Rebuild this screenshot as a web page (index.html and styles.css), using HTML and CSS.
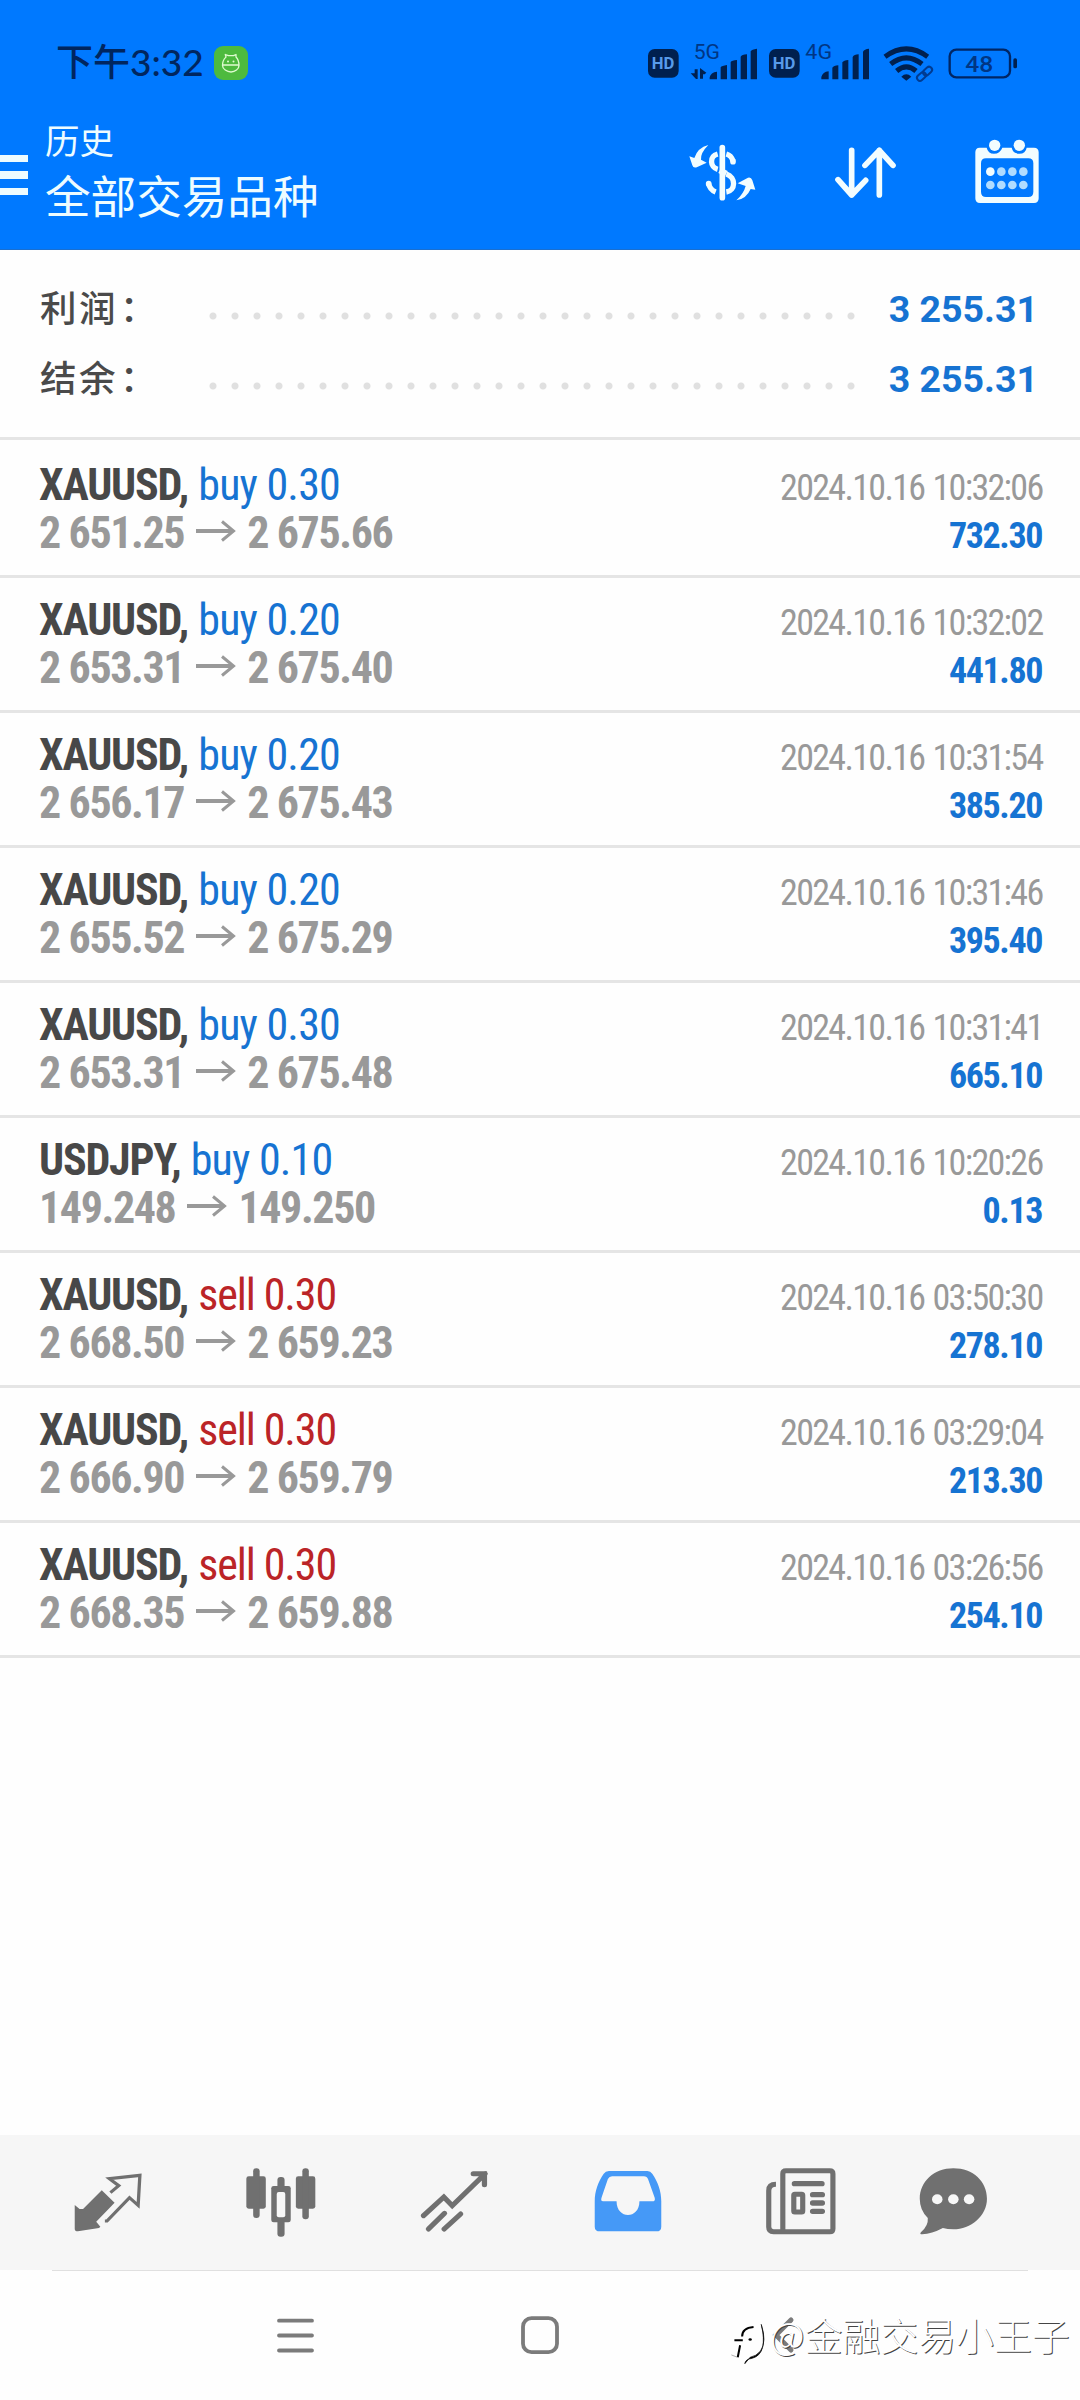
FILE: index.html
```html
<!DOCTYPE html>
<html lang="zh-CN">
<head>
<meta charset="utf-8">
<title>历史</title>
<link rel="stylesheet" href="styles.css">
</head>
<body>
<header class="header">
  <div class="status">
    <span class="clock">下午3:32</span>
    <svg class="app-badge" width="34" height="34" viewBox="0 0 34 34"><rect width="34" height="34" rx="9" fill="#4dba3e"/><g fill="none" stroke="#dffbd0" stroke-width="1.3" stroke-linejoin="round"><path d="M8.500 19.500C8.500 14 10.500 12.500 12 11L11.300 8.500L14.500 9.700H19.500L22 8.500L22 11C24 13 25 15 25 19.500C25 23 21 26 17 26S8.500 23 8.500 19.500ZM8.500 19H25"/></g><circle cx="14" cy="15.500" r="1" fill="#dffbd0"/><circle cx="19.500" cy="15.500" r="1" fill="#dffbd0"/></svg>
    <svg class="status-icons" width="374" height="46.700" viewBox="80 50 1122 140">
      <g fill="#00204f">
        <rect x="86" y="86" width="92" height="86" rx="20"/><rect x="449" y="86" width="92" height="86" rx="20"/>
        <path d="M271 177v-6q3-15 22-17v23zM304 177v-36q3-5 19-7v43zM334 177v-52q3-5 19-6v58zM364 177v-68q3-6 19-7v75zM394 177v-84q3-6 19-8v92z"/>
        <path d="M606 177v-7q4-15 22-17v24zM639 177v-35q4-6 18-7v42zM669 177v-51q4-6 18-7v58zM700 177v-67q4-7 18-8v75zM731 177v-83q4-8 18-9v92z"/>
        <path d="M226 147h9v29h-5l-16-17h12zM242 175v-32l19 14-5 5h-5v13z"/>
        <path d="M846 169q15-14 30 0l-15 12z"/>
        <rect x="1182" y="114" width="11" height="30" rx="5"/>
      </g>
      <g fill="none" stroke="#00204f" stroke-width="15">
        <path d="M797 109Q861 62 925 109M814 131Q861 94 908 131M832 152Q861 127 890 152"/>
        <rect x="991" y="88" width="181" height="83" rx="20" stroke-width="7" stroke="#002665"/>
        <g stroke-width="6" stroke="#003b91"><rect x="-17" y="-9" width="30" height="18" rx="9" transform="translate(908 167) rotate(-42)"/><rect x="-14" y="-9" width="30" height="18" rx="9" transform="translate(924 153) rotate(-42)"/></g>
      </g>
      <g class="status-label">
        <text x="97" y="147" font-size="50" font-weight="700" fill="#579bea">HD</text><text x="460" y="147" font-size="50" font-weight="700" fill="#579bea">HD</text>
        <text x="223" y="116" font-size="60" textLength="79" lengthAdjust="spacingAndGlyphs">5G</text><text x="558" y="116" font-size="60" textLength="80" lengthAdjust="spacingAndGlyphs">4G</text>
        <text x="1038" y="155" font-size="68" textLength="84" lengthAdjust="spacingAndGlyphs" font-weight="500">48</text>
      </g>
    </svg>
  </div>
  <div class="toolbar">
    <div class="menu"><i></i><i></i><i></i></div>
    <div class="titles"><div class="title">历史</div><div class="subtitle">全部交易品种</div></div>
    <svg class="actions" width="354" height="68" viewBox="200 352 1062 204">
      <g fill="none" stroke="#f2fdff" stroke-width="17" stroke-linecap="round" stroke-linejoin="round">
        <path d="M306 384v150"/>
        <path d="M292 403C266 410 269 443 292 449M318 403Q333 407 338 424M318 463C348 473 346 513 318 517M265 492Q268 510 286 517" stroke-width="16" stroke-linecap="butt"/>
        <path d="M338 424v2M265 492v1" stroke-width="17"/>
        <path d="M318 462L298 452" stroke-width="18" stroke-linecap="butt"/>
        <path d="M694 392V526M653 480L694 526L736 482M777 526V392M734 437L777 392L818 437"/>
      </g>
      <g fill="#f2fdff">
        <path d="M264 376Q240 400 242 420L259 429L231 442Q219 447 216 437L207 410L222 415Q232 384 264 376ZM348 542Q370 522 376 499L352 491L383 474Q392 471 396 482L405 510L391 508Q378 538 348 542Z"/>
        <path fill-rule="evenodd" d="M1078 384H1099Q1103 402 1121 402T1146 384H1174Q1178 402 1197 402T1219 384H1241Q1255 384 1255 398V536Q1255 550 1241 550H1079Q1065 550 1065 536V398Q1065 384 1078 384ZM1097 416Q1082 416 1082 431V516Q1082 532 1097 532H1224Q1239 532 1239 516V431Q1239 416 1224 416Z"/>
        <circle cx="1123" cy="377" r="17"/><circle cx="1197" cy="377" r="17"/><circle cx="1110" cy="456" r="13"/>
        <g fill="#b0dcff"><circle cx="1143" cy="456" r="13"/><circle cx="1176" cy="456" r="13"/><circle cx="1209" cy="456" r="13"/><circle cx="1110" cy="496" r="13"/><circle cx="1143" cy="496" r="13"/><circle cx="1176" cy="496" r="13"/><circle cx="1209" cy="496" r="13"/></g>
      </g>
    </svg>
  </div>
</header>
<svg width="0" height="0" class="defs"><symbol id="arrow" viewBox="0 0 40 22"><path d="M0 11H37" fill="none" stroke="#999" stroke-width="4"/><path d="M26 1.500L37.500 11L26 20.500" fill="none" stroke="#999" stroke-width="3"/></symbol></svg>
<main class="content">
  <section class="summary">
    <div class="total"><span class="total-name">利润<span class="colon">：</span></span><span class="dots"></span><b class="total-value">3 255.31</b></div>
    <div class="total"><span class="total-name">结余<span class="colon">：</span></span><span class="dots"></span><b class="total-value">3 255.31</b></div>
  </section>
  <section class="deals">
    <div class="deal"><div class="line"><span><b class="symbol">XAUUSD,</b> <span class="buy">buy 0.30</span></span><span class="date">2024.10.16 10:32:06</span></div><div class="line"><span class="price">2 651.25<svg class="arrow"><use href="#arrow"/></svg>2 675.66</span><b class="profit">732.30</b></div></div>
    <div class="deal"><div class="line"><span><b class="symbol">XAUUSD,</b> <span class="buy">buy 0.20</span></span><span class="date">2024.10.16 10:32:02</span></div><div class="line"><span class="price">2 653.31<svg class="arrow"><use href="#arrow"/></svg>2 675.40</span><b class="profit">441.80</b></div></div>
    <div class="deal"><div class="line"><span><b class="symbol">XAUUSD,</b> <span class="buy">buy 0.20</span></span><span class="date">2024.10.16 10:31:54</span></div><div class="line"><span class="price">2 656.17<svg class="arrow"><use href="#arrow"/></svg>2 675.43</span><b class="profit">385.20</b></div></div>
    <div class="deal"><div class="line"><span><b class="symbol">XAUUSD,</b> <span class="buy">buy 0.20</span></span><span class="date">2024.10.16 10:31:46</span></div><div class="line"><span class="price">2 655.52<svg class="arrow"><use href="#arrow"/></svg>2 675.29</span><b class="profit">395.40</b></div></div>
    <div class="deal"><div class="line"><span><b class="symbol">XAUUSD,</b> <span class="buy">buy 0.30</span></span><span class="date">2024.10.16 10:31:41</span></div><div class="line"><span class="price">2 653.31<svg class="arrow"><use href="#arrow"/></svg>2 675.48</span><b class="profit">665.10</b></div></div>
    <div class="deal"><div class="line"><span><b class="symbol">USDJPY,</b> <span class="buy">buy 0.10</span></span><span class="date">2024.10.16 10:20:26</span></div><div class="line"><span class="price">149.248<svg class="arrow"><use href="#arrow"/></svg>149.250</span><b class="profit">0.13</b></div></div>
    <div class="deal"><div class="line"><span><b class="symbol">XAUUSD,</b> <span class="sell">sell 0.30</span></span><span class="date">2024.10.16 03:50:30</span></div><div class="line"><span class="price">2 668.50<svg class="arrow"><use href="#arrow"/></svg>2 659.23</span><b class="profit">278.10</b></div></div>
    <div class="deal"><div class="line"><span><b class="symbol">XAUUSD,</b> <span class="sell">sell 0.30</span></span><span class="date">2024.10.16 03:29:04</span></div><div class="line"><span class="price">2 666.90<svg class="arrow"><use href="#arrow"/></svg>2 659.79</span><b class="profit">213.30</b></div></div>
    <div class="deal"><div class="line"><span><b class="symbol">XAUUSD,</b> <span class="sell">sell 0.30</span></span><span class="date">2024.10.16 03:26:56</span></div><div class="line"><span class="price">2 668.35<svg class="arrow"><use href="#arrow"/></svg>2 659.88</span><b class="profit">254.10</b></div></div>
  </section>
</main>
<nav class="tabs">
  <svg class="tab" preserveAspectRatio="none" viewBox="214 140 202 210"><path d="M297 210L334 247L281 304L293 319L289 323L228 333Q219 333 219 325V254L233 266H243Z" fill="#707070"/><path d="M322 217L346 196L319 175L407 165L402 255L377 232L312 302H306" fill="none" stroke="#707070" stroke-width="9.500"/></svg>
  <svg class="tab" preserveAspectRatio="none" viewBox="714 140 205 210"><g fill="#707070"><rect x="715" y="168" width="57" height="97" rx="7"/><rect x="860" y="168" width="57" height="97" rx="7"/><rect x="735" y="144" width="19" height="149" rx="9"/><rect x="879" y="144" width="19" height="153" rx="9"/><rect x="806" y="170" width="21" height="179" rx="9"/><rect x="788" y="197" width="57" height="109" rx="7"/></g><rect x="804" y="215" width="25" height="76" rx="6" fill="#f7f7f7"/></svg>
  <svg class="tab" preserveAspectRatio="none" viewBox="1218 140 200 210"><path d="M1231 286L1289 230L1313 256L1407 160M1373 160H1405V193M1245 326L1291 279M1290 326L1337 281" fill="none" stroke="#707070" stroke-width="15" stroke-linecap="round"/></svg>
  <svg class="tab" preserveAspectRatio="none" viewBox="153 140 202 210"><path fill="#4599f7" fill-rule="evenodd" d="M199 152H310Q319 152 324 160C340 184 350 213 350 242V319Q350 333 336 333H173Q158 333 158 319V242C158 213 168 184 184 160Q189 152 199 152ZM208 168Q200 168 196 176L178 231Q174 243 182 243H221C221 298 287 298 287 243H324Q334 243 331 232L312 177Q309 168 300 168Z"/></svg>
  <svg class="tab" preserveAspectRatio="none" viewBox="656 140 204 210"><g fill="none" stroke="#707070"><path d="M705 334V160Q705 151 714 151H842Q851 151 851 160V325Q851 334 842 334H678Q664 334 664 320V211Q664 192 685 192" stroke-width="15"/><rect x="737" y="222" width="26" height="53" rx="3" stroke-width="15"/><path d="M739 190H819M792 223H820M792 248H820M792 273H820" stroke-width="16" stroke-linecap="round"/></g></svg>
  <svg class="tab" preserveAspectRatio="none" viewBox="1098 140 200 210"><path fill="#707070" d="M1199 144C1256 144 1295 184 1295 235S1249 327 1199 327Q1182 327 1169 323Q1137 341 1110 342Q1101 342 1107 335Q1128 316 1126 293Q1103 269 1103 235C1103 184 1144 144 1199 144Z"/><g fill="#f7f7f7"><circle cx="1153" cy="237" r="15"/><circle cx="1199" cy="237" r="15"/><circle cx="1244" cy="237" r="15"/></g></svg>
</nav>
<footer class="system">
  <svg class="sys-icons" width="540" height="44" viewBox="0 0 540 44"><g fill="none" stroke="#7b7b7b" stroke-width="3.800" stroke-linecap="round"><path d="M4 7.700H37M4 22.500H37M4 37.500H37"/><rect x="248" y="5.200" width="34" height="34" rx="8.500"/><path d="M516 7L501 22L516 37" stroke-width="5"/></g></svg>
  <div class="watermark"><svg width="37" height="47" viewBox="30 595 110 140"><g fill="none" stroke="#000"><path d="M66 650Q66 625 100 622M43 661H68M60 676L53 712" stroke-width="6"/><path d="M34 705L52 712" stroke-width="2" stroke="#888"/></g><path d="M123 614Q140 665 121 693Q108 709 90 712L74 731Q75 718 96 715Q144 702 123 614Z" stroke="#000" stroke-width="2"/><ellipse cx="90" cy="659" rx="5" ry="4"/></svg><span>@金融交易小王子</span></div>
</footer>
</body>
</html>
```
FILE: styles.css
```css
* { box-sizing: border-box; }
body {
  margin: 0; width: 1080px; height: 2400px; overflow: hidden;
  display: flex; flex-direction: column; background: #fefefe;
  font-family: "Roboto Condensed", Roboto, "Noto Sans CJK SC", sans-serif;
}
svg { display: block; flex: none; }
.defs { position: absolute; }
.header {
  height: 250px; flex: none; background: #0079ff;
  border-bottom: 1px solid #1a6fd0; font-family: "Noto Sans CJK SC", sans-serif;
}
.status { display: flex; align-items: center; height: 120px; padding: 0 60px 0 56px; color: #00265f; }
.clock {
  width: 158px; font: 500 37px/54px Lato, "Noto Sans CJK SC", sans-serif;
  white-space: nowrap; padding-top: 3px;
}
.app-badge { margin-top: 6px; }
.status-icons { margin-left: auto; overflow: visible; }
.status-label { font-family: Roboto, sans-serif; fill: #003684; }
.toolbar { display: flex; height: 129px; }
.menu { width: 28px; padding-top: 35px; display: flex; flex-direction: column; gap: 9px; }
.menu i { height: 7.400px; background: #eefcff; }
.titles { margin-left: 17px; color: #eefcff; white-space: nowrap; }
.title { font-size: 34.500px; line-height: 44px; margin-top: -3px; }
.subtitle { font-size: 45.600px; line-height: 64px; margin-top: 1px; }
.actions { margin: 17px 39px 0 auto; }
.content { flex: 1; }
.summary { height: 190px; padding: 24px 42px 0 40px; border-bottom: 3px solid #e5e5e5; }
.total { display: flex; align-items: center; height: 70px; }
.total-name {
  width: 168px; padding-bottom: 5px; letter-spacing: 2.500px; white-space: nowrap;
  font: 500 36.500px/65px "Noto Sans CJK SC", sans-serif; color: #4a4a4a;
}
.colon { margin-left: 2px; }
.dots {
  width: 660px; height: 8px; margin-top: 14px;
  background: radial-gradient(circle at 5px 4px, #e0e0e0 3px, transparent 4px) 0 0 / 22px 8px repeat-x;
}
.total-value {
  margin-left: auto; padding-top: 1px; white-space: nowrap;
  font: 700 37.500px/69px Roboto, sans-serif; color: #1673d2;
}
.deal {
  height: 135px; padding: 18px 38px 0 39px; border-bottom: 3px solid #e5e5e5;
  font-size: 44px; line-height: 48px; font-stretch: 75%;
}
.deal:first-child { height: 138px; padding-top: 21px; }
.line { display: flex; justify-content: space-between; align-items: baseline; height: 48px; white-space: nowrap; }
.symbol { color: #484848; letter-spacing: -1.200px; }
.buy { color: #1673d2; letter-spacing: -.8px; }
.sell { color: #bb2427; letter-spacing: -1.100px; }
.date { font-size: 36px; color: #999; letter-spacing: -1.680px; word-spacing: 1.500px; margin-right: -.5px; }
.price { display: flex; align-items: baseline; font-weight: 700; color: #999; letter-spacing: -1.400px; }
.arrow { width: 40px; height: 22px; margin: 0 11px 0 12px; position: relative; top: -6px; }
.profit { font-size: 36px; color: #1673d2; letter-spacing: -1.400px; }
.tabs {
  height: 135px; flex: none; padding-left: 73px; background: #f6f6f6;
  display: flex; gap: 103.200px; align-items: flex-start;
}
.tab { height: 70px; width: 70px; margin-top: 31.700px; }
.tab:last-child { margin-left: -21px; }
.system { height: 130px; flex: none; background: #fefefe; position: relative; padding: 43px 0 0 275px; }
.system::before { content: ""; position: absolute; left: 52px; right: 52px; top: 0; height: 1px; background: #e0e0e0; }
.watermark {
  position: absolute; left: 730px; top: 48px; display: flex; align-items: flex-start;
  font: 300 37.900px/42px "Noto Sans CJK SC", sans-serif; color: #fff; white-space: nowrap;
  text-shadow: 1px 1px 0 #444;
}
.watermark span { margin: -5px 0 0 3px; }
```
